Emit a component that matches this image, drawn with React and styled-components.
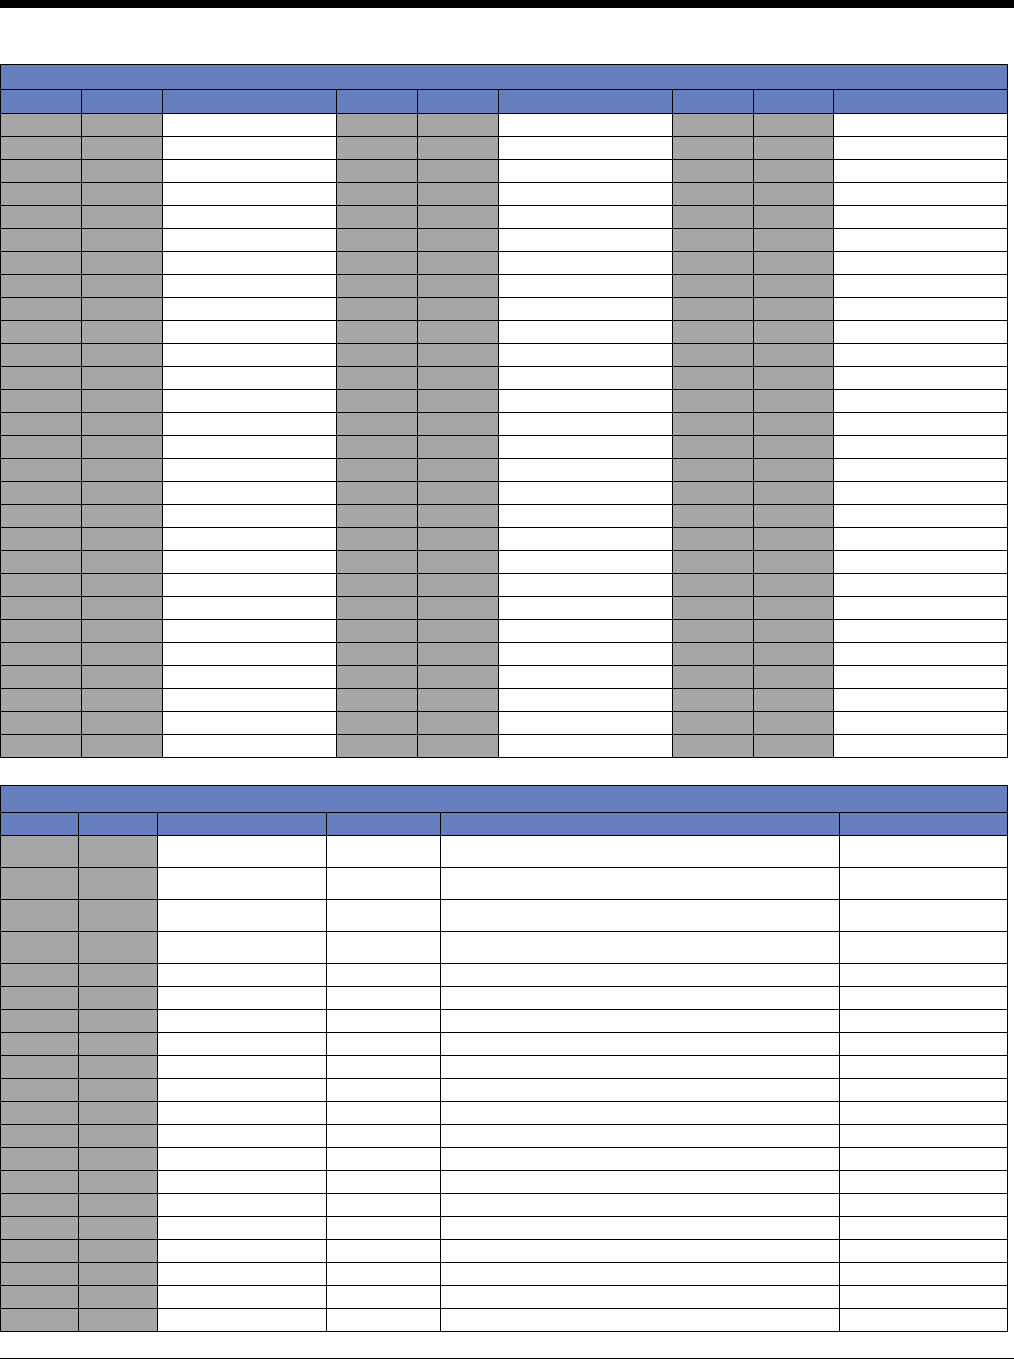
import React from 'react'
import styled, { createGlobalStyle } from 'styled-components'

const GlobalStyle = createGlobalStyle`
  html, body {
    margin: 0;
    padding: 0;
    background: #fff;
    font-family: 'Liberation Sans', Arial, sans-serif;
  }
`

const BLUE = '#667ebd'
const GRAY = '#a6a6a6'

const Page = styled.div`
  width: 1014px;
  display: flex;
  flex-direction: column;
`

const TopBar = styled.div`
  height: 8px;
  background: #000;
`

const Table = styled.div`
  width: 1008px;
  box-sizing: border-box;
  border: 1px solid #000;
  border-bottom: none;
  margin-top: ${p => p.$gap}px;
  display: flex;
  flex-direction: column;
`

const TitleRow = styled.div`
  height: ${p => p.$h}px;
  box-sizing: border-box;
  background: ${BLUE};
  border-bottom: 1px solid #000;
`

const Row = styled.div`
  display: grid;
  grid-template-columns: ${p => p.$cols};
  height: ${p => p.$h}px;
  box-sizing: border-box;
  border-bottom: 1px solid #000;
`

const Cell = styled.div`
  background: ${p => p.$bg};
  border-right: 1px solid #000;
  box-sizing: border-box;
  &:last-child {
    border-right: none;
  }
`

const FootRule = styled.div`
  margin-top: 26px;
  height: 1px;
  background: #000;
`

const firstCols = [81, 81, 174, 81, 81, 174, 81, 80, 173]
const firstFills = ['g', 'g', 'w', 'g', 'g', 'w', 'g', 'g', 'w']

const secondCols = [78, 79, 169, 114, 399, 167]
const secondFills = ['g', 'g', 'w', 'w', 'w', 'w']

const fill = f => (f === 'g' ? GRAY : '#fff')

const GridTable = ({ gap, titleH, headH, cols, fills, rows }) => {
  const template = cols.map(c => c + 'px').join(' ')
  return (
    <Table $gap={gap}>
      <TitleRow $h={titleH} />
      <Row $cols={template} $h={headH}>
        {cols.map((c, i) => <Cell key={i} $bg={BLUE} />)}
      </Row>
      {rows.map((h, r) => (
        <Row key={r} $cols={template} $h={h}>
          {fills.map((f, i) => <Cell key={i} $bg={fill(f)} />)}
        </Row>
      ))}
    </Table>
  )
}

const App = () => {
  const firstRows = Array(28).fill(23)
  const secondRows = [...Array(4).fill(32), ...Array(16).fill(23)]
  return (
    <>
      <GlobalStyle />
      <Page>
        <TopBar />
        <GridTable gap={56} titleH={25} headH={24} cols={firstCols} fills={firstFills} rows={firstRows} />
        <GridTable gap={27} titleH={27} headH={23} cols={secondCols} fills={secondFills} rows={secondRows} />
        <FootRule />
      </Page>
    </>
  )
}

export default App
